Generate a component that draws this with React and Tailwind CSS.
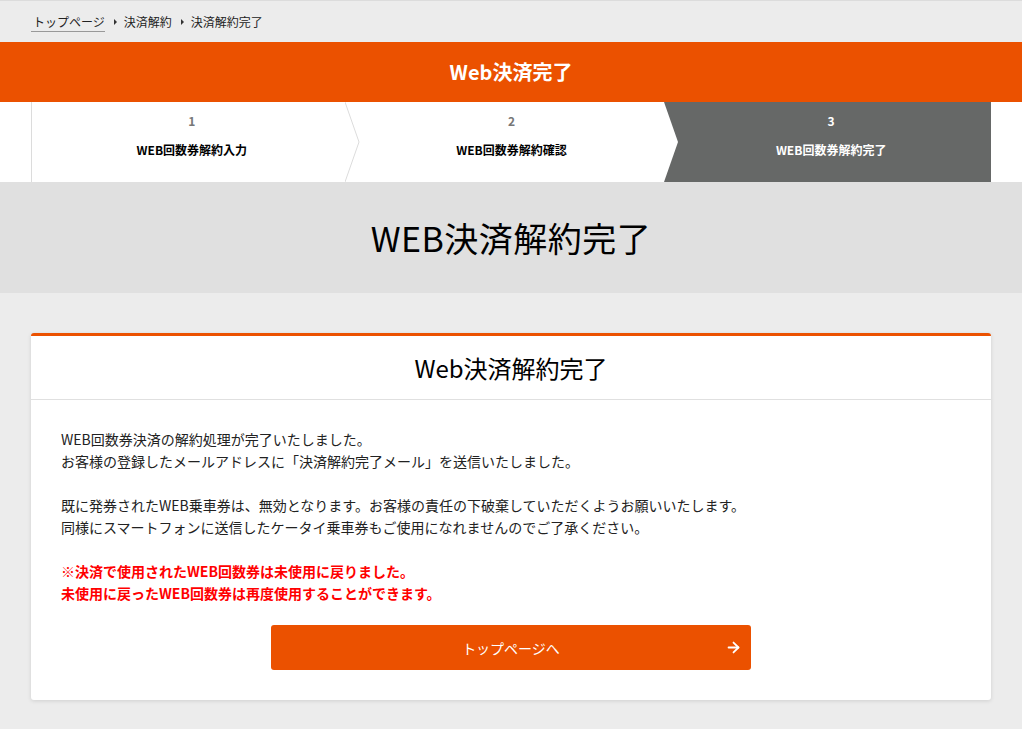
import { ArrowRight } from 'lucide-react';

const steps = [
  { no: '1', label: 'WEB回数券解約入力' },
  { no: '2', label: 'WEB回数券解約確認' },
  { no: '3', label: 'WEB回数券解約完了', active: true },
];

// arrow between steps; the second one sits on the dark active step
function Chevron({ nextActive }) {
  return (
    <svg className="absolute top-0 -right-[8px] z-10 h-20 w-[15px]" viewBox="0 0 15 80" preserveAspectRatio="none">
      {nextActive && <rect x="0" y="0" width="15" height="80" fill="#666867" />}
      <polygon points="0,0 14,40 0,80" fill="#fff" />
      {!nextActive && <polyline points="0,0 14,40 0,80" fill="none" stroke="#dcdcdc" strokeWidth="1" />}
    </svg>
  );
}

export default function App() {
  return (
    <div className="min-h-screen bg-[#ececec] text-[#222] font-['Noto_Sans_CJK_JP','Noto_Sans',sans-serif]">
      {/* breadcrumb */}
      <div className="border-t border-[#dcdcdc] bg-[#ececec]">
        <div className="mx-auto flex h-[41px] max-w-[960px] items-center gap-[7px] text-[12px] leading-none">
          <span className="border-b border-[#999] pb-[3px] pl-[2px] pt-[4px]">トップページ</span>
          <span className="ml-[2px] h-0 w-0 border-y-[3px] border-l-[3px] border-y-transparent border-l-[#333]" />
          <span>決済解約</span>
          <span className="ml-[2px] h-0 w-0 border-y-[3px] border-l-[3px] border-y-transparent border-l-[#333]" />
          <span>決済解約完了</span>
        </div>
      </div>

      {/* page header */}
      <div className="flex h-[60px] items-center justify-center bg-[#eb5100] text-[20px] font-bold text-white">
        Web決済完了
      </div>

      {/* steps */}
      <div className="bg-white">
        <div className="mx-auto grid h-20 max-w-[960px] grid-cols-3 border-l border-[#dcdcdc]">
          {steps.map((s, i) => (
            <div
              key={s.no}
              className={`relative flex flex-col items-center pt-[11px] text-[12px] font-bold ${
                s.active ? 'bg-[#666867] text-white' : 'text-black'
              }`}
            >
              <span className={`leading-[16px] ${s.active ? 'text-white' : 'text-[#777]'}`}>{s.no}</span>
              <span className="mt-[13px] leading-[16px]">{s.label}</span>
              {i < 2 && <Chevron nextActive={i === 1} />}
            </div>
          ))}
        </div>
      </div>

      {/* title band */}
      <div className="flex h-[111px] items-center justify-center bg-[#e0e0e0]">
        <h1 className="text-[34px] font-normal leading-none tracking-[0.5px] text-black">WEB決済解約完了</h1>
      </div>

      {/* card */}
      <div className="mx-auto max-w-[960px] pb-[29px] pt-[40px]">
        <div className="rounded-[3px] border-t-[3px] border-[#eb5100] bg-white shadow-[0_1px_4px_rgba(0,0,0,0.12)]">
          <div className="flex h-[64px] items-center justify-center border-b border-[#e0e0e0] text-[24px] text-black">
            Web決済解約完了
          </div>
          <div className="px-[30px] pb-[30px] pt-[28px] text-[14px] leading-[22px]">
            <p>
              WEB回数券決済の解約処理が完了いたしました。
              <br />
              お客様の登録したメールアドレスに「決済解約完了メール」を送信いたしました。
            </p>
            <p className="mt-[22px]">
              既に発券されたWEB乗車券は、無効となります。お客様の責任の下破棄していただくようお願いいたします。
              <br />
              同様にスマートフォンに送信したケータイ乗車券もご使用になれませんのでご了承ください。
            </p>
            <p className="mt-[22px] font-bold text-[#ff0000]">
              ※決済で使用されたWEB回数券は未使用に戻りました。
              <br />
              未使用に戻ったWEB回数券は再度使用することができます。
            </p>
            <div className="mt-[21px] flex justify-center">
              <button className="relative flex h-[45px] w-[480px] items-center justify-center rounded-[3px] bg-[#eb5100] text-[14px] text-white">
                トップページへ
                <ArrowRight className="absolute right-[9px] h-[17px] w-[17px]" strokeWidth={2.5} />
              </button>
            </div>
          </div>
        </div>
      </div>
    </div>
  );
}
